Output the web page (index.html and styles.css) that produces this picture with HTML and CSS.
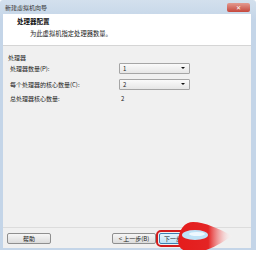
FILE: index.html
```html
<!DOCTYPE html>
<html lang="zh-CN">
<head>
    <meta charset="UTF-8">
    <title>新建虚拟机向导</title>
    <link rel="stylesheet" href="styles.css">
</head>
<body>
    <div class="window">
        <div class="titlebar">
            <span class="title">新建虚拟机向导</span>
            <span class="close">✕</span>
        </div>

        <div class="client">
            <div class="header">
                <div class="header-title">处理器配置</div>
                <div class="header-sub">为此虚拟机指定处理器数量。</div>
            </div>

            <div class="main">
                <div class="group-label">处理器</div>
                <div class="row">
                    <span class="label">处理器数量(P):</span>
                    <div class="select"><span>1</span><span class="arrow"></span></div>
                </div>
                <div class="row">
                    <span class="label">每个处理器的核心数量(C):</span>
                    <div class="select"><span>2</span><span class="arrow"></span></div>
                </div>
                <div class="row row-text">
                    <span class="label">总处理器核心数量:</span>
                    <span class="value">2</span>
                </div>
            </div>

            <div class="footer">
                <button class="btn">帮助</button>
                <div class="nav">
                    <button class="btn">&lt; 上一步(B)</button>
                    <button class="btn btn-next">下一步(N) &gt;</button>
                </div>
            </div>
        </div>

        <!-- red brush mark over the next button -->
        <svg class="mark" width="62" height="34" viewBox="0 0 62 34">
            <defs>
                <linearGradient id="fade" x1="0" y1="0" x2="1" y2="0">
                    <stop offset="0" stop-color="#e41c1c"/>
                    <stop offset="0.55" stop-color="#e42424"/>
                    <stop offset="0.8" stop-color="#f4b0b0" stop-opacity="0.7"/>
                    <stop offset="1" stop-color="#ffffff" stop-opacity="0"/>
                </linearGradient>
            </defs>
            <path d="M5 22 C6 10 12 3 20 3 C32 3 46 10 60 17 C50 22 40 31 24 33 C12 34 5 30 5 22 Z" fill="url(#fade)"/>
            <ellipse cx="22" cy="16" rx="13" ry="5" fill="#bfe3f7"/>
            <ellipse cx="24" cy="15" rx="8" ry="2" fill="#eef8fe"/>
        </svg>
    </div>
</body>
</html>
```

FILE: styles.css
```css
body {
    margin: 0;
    background: #fff;
    font-family: "Noto Sans CJK SC", "Noto Sans", sans-serif;
    font-size: 6px;
    color: #222;
}
.window {
    position: relative;
    width: 256px;
    height: 250px;
    box-sizing: border-box;
    padding: 0 5px 2px 3px;
    background: linear-gradient(#d3e0ed, #c4d5e8 20px);
    border-radius: 3px 3px 0 0;
    display: flex;
    flex-direction: column;
}
.titlebar {
    height: 14px;
    display: flex;
    align-items: center;
    justify-content: space-between;
}
.title {
    padding-left: 2px;
    color: #333;
}
.close {
    width: 23px;
    height: 9px;
    margin-right: 1px;
    border-radius: 2px;
    background: linear-gradient(#e39a90, #c5473c);
    color: #fff;
    font-size: 6px;
    line-height: 9px;
    text-align: center;
}
.client {
    flex: 1;
    background: #f0f0f0;
    display: flex;
    flex-direction: column;
}
.header {
    height: 28px;
    background: #fff;
    border-bottom: 1px solid #d5d5d5;
    padding: 3px 0 0 14px;
    box-sizing: content-box;
}
.header-title {
    font-weight: bold;
    font-size: 6.5px;
    line-height: 8px;
    color: #111;
}
.header-sub {
    margin: 5px 0 0 13px;
    font-size: 6.3px;
    line-height: 8px;
}
.main {
    flex: 1;
    padding: 8px 0 0 5px;
}
.group-label {
    line-height: 8px;
    margin-bottom: 1px;
}
.row {
    display: flex;
    align-items: center;
    height: 10px;
    padding-left: 2px;
    margin-bottom: 6px;
}
.row-text {
    margin-top: -2px;
}
.label {
    width: 109px;
}
.select {
    width: 66px;
    height: 9px;
    border: 1px solid #a5a5a5;
    border-radius: 1px;
    background: linear-gradient(#fafafa, #e6e6e6);
    display: flex;
    align-items: center;
    justify-content: space-between;
    padding-left: 3px;
    box-sizing: content-box;
}
.arrow {
    width: 0;
    height: 0;
    margin-right: 4px;
    border-left: 2px solid transparent;
    border-right: 2px solid transparent;
    border-top: 2px solid #111;
}
.value {
    padding-left: 2px;
}
.footer {
    height: 20px;
    border-top: 1px solid #dcdcdc;
    display: flex;
    align-items: center;
    justify-content: space-between;
    padding: 0 48px 0 4px;
}
.nav {
    display: flex;
    gap: 3px;
}
.btn {
    width: 44px;
    height: 11px;
    padding: 0;
    font-family: inherit;
    font-size: 6px;
    color: #222;
    border: 1px solid #8f8f8f;
    border-radius: 2px;
    background: linear-gradient(#f6f6f6, #dcdcdc);
}
.btn-next {
    background: linear-gradient(#e4f3fc, #bde2f6);
    border-color: #3c7fb1;
    outline: 2px solid #d21c1c;
    outline-offset: 1px;
    text-align: left;
    padding-left: 4px;
}
.mark {
    position: absolute;
    left: 173px;
    top: 219px;
}
```
